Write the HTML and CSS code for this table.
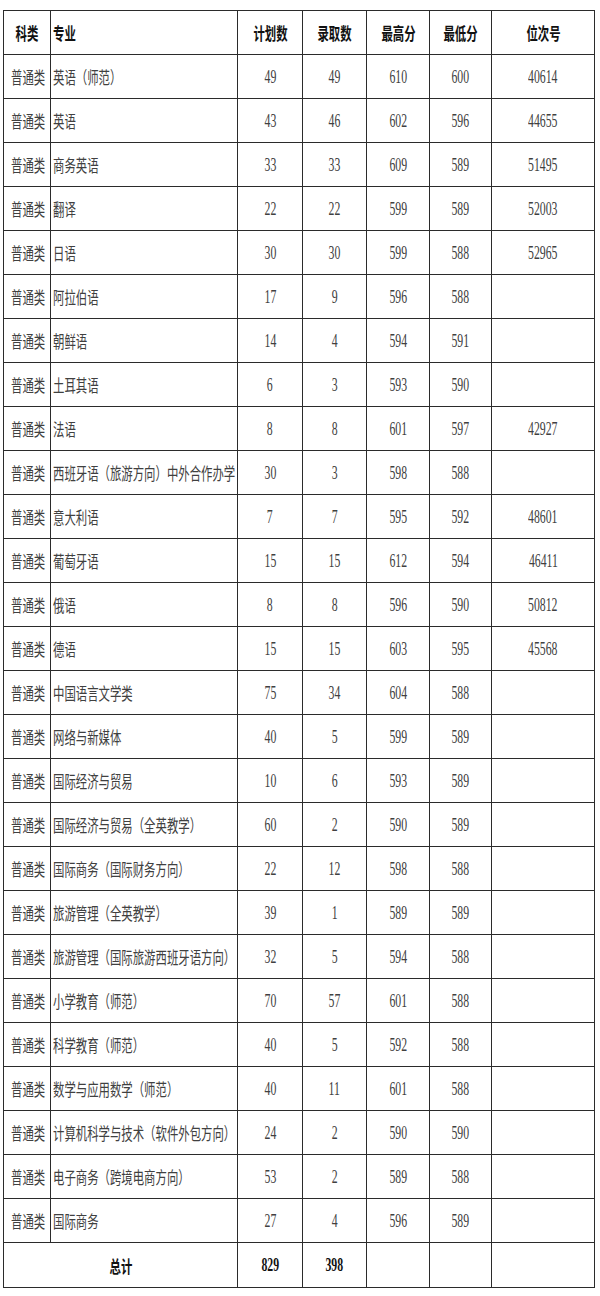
FILE: index.html
```html
<!DOCTYPE html>
<html lang="zh">
<head>
<meta charset="utf-8">
<title>录取分数</title>
<link rel="stylesheet" href="styles.css">
</head>
<body>
<div class="page">
<table class="grid">
<colgroup>
<col class="w-cat"><col class="w-major"><col class="w-plan"><col class="w-adm"><col class="w-hi"><col class="w-lo"><col class="w-rank">
</colgroup>
<thead>
<tr class="head">
<th class="ctr"><span class="s">科类</span></th>
<th class="left"><span class="s">专业</span></th>
<th class="ctr"><span class="s">计划数</span></th>
<th class="ctr"><span class="s">录取数</span></th>
<th class="ctr"><span class="s">最高分</span></th>
<th class="ctr"><span class="s">最低分</span></th>
<th class="ctr"><span class="s">位次号</span></th>
</tr>
</thead>
<tbody>
<tr><td class="cat"><span class="s">普通类</span></td><td class="left"><span class="s">英语（师范）</span></td><td class="num"><span class="s">49</span></td><td class="num"><span class="s">49</span></td><td class="num"><span class="s">610</span></td><td class="num"><span class="s">600</span></td><td class="num"><span class="s">40614</span></td></tr>
<tr><td class="cat"><span class="s">普通类</span></td><td class="left"><span class="s">英语</span></td><td class="num"><span class="s">43</span></td><td class="num"><span class="s">46</span></td><td class="num"><span class="s">602</span></td><td class="num"><span class="s">596</span></td><td class="num"><span class="s">44655</span></td></tr>
<tr><td class="cat"><span class="s">普通类</span></td><td class="left"><span class="s">商务英语</span></td><td class="num"><span class="s">33</span></td><td class="num"><span class="s">33</span></td><td class="num"><span class="s">609</span></td><td class="num"><span class="s">589</span></td><td class="num"><span class="s">51495</span></td></tr>
<tr><td class="cat"><span class="s">普通类</span></td><td class="left"><span class="s">翻译</span></td><td class="num"><span class="s">22</span></td><td class="num"><span class="s">22</span></td><td class="num"><span class="s">599</span></td><td class="num"><span class="s">589</span></td><td class="num"><span class="s">52003</span></td></tr>
<tr><td class="cat"><span class="s">普通类</span></td><td class="left"><span class="s">日语</span></td><td class="num"><span class="s">30</span></td><td class="num"><span class="s">30</span></td><td class="num"><span class="s">599</span></td><td class="num"><span class="s">588</span></td><td class="num"><span class="s">52965</span></td></tr>
<tr><td class="cat"><span class="s">普通类</span></td><td class="left"><span class="s">阿拉伯语</span></td><td class="num"><span class="s">17</span></td><td class="num"><span class="s">9</span></td><td class="num"><span class="s">596</span></td><td class="num"><span class="s">588</span></td><td class="num"></td></tr>
<tr><td class="cat"><span class="s">普通类</span></td><td class="left"><span class="s">朝鲜语</span></td><td class="num"><span class="s">14</span></td><td class="num"><span class="s">4</span></td><td class="num"><span class="s">594</span></td><td class="num"><span class="s">591</span></td><td class="num"></td></tr>
<tr><td class="cat"><span class="s">普通类</span></td><td class="left"><span class="s">土耳其语</span></td><td class="num"><span class="s">6</span></td><td class="num"><span class="s">3</span></td><td class="num"><span class="s">593</span></td><td class="num"><span class="s">590</span></td><td class="num"></td></tr>
<tr><td class="cat"><span class="s">普通类</span></td><td class="left"><span class="s">法语</span></td><td class="num"><span class="s">8</span></td><td class="num"><span class="s">8</span></td><td class="num"><span class="s">601</span></td><td class="num"><span class="s">597</span></td><td class="num"><span class="s">42927</span></td></tr>
<tr><td class="cat"><span class="s">普通类</span></td><td class="left"><span class="s">西班牙语（旅游方向）中外合作办学</span></td><td class="num"><span class="s">30</span></td><td class="num"><span class="s">3</span></td><td class="num"><span class="s">598</span></td><td class="num"><span class="s">588</span></td><td class="num"></td></tr>
<tr><td class="cat"><span class="s">普通类</span></td><td class="left"><span class="s">意大利语</span></td><td class="num"><span class="s">7</span></td><td class="num"><span class="s">7</span></td><td class="num"><span class="s">595</span></td><td class="num"><span class="s">592</span></td><td class="num"><span class="s">48601</span></td></tr>
<tr><td class="cat"><span class="s">普通类</span></td><td class="left"><span class="s">葡萄牙语</span></td><td class="num"><span class="s">15</span></td><td class="num"><span class="s">15</span></td><td class="num"><span class="s">612</span></td><td class="num"><span class="s">594</span></td><td class="num"><span class="s">46411</span></td></tr>
<tr><td class="cat"><span class="s">普通类</span></td><td class="left"><span class="s">俄语</span></td><td class="num"><span class="s">8</span></td><td class="num"><span class="s">8</span></td><td class="num"><span class="s">596</span></td><td class="num"><span class="s">590</span></td><td class="num"><span class="s">50812</span></td></tr>
<tr><td class="cat"><span class="s">普通类</span></td><td class="left"><span class="s">德语</span></td><td class="num"><span class="s">15</span></td><td class="num"><span class="s">15</span></td><td class="num"><span class="s">603</span></td><td class="num"><span class="s">595</span></td><td class="num"><span class="s">45568</span></td></tr>
<tr><td class="cat"><span class="s">普通类</span></td><td class="left"><span class="s">中国语言文学类</span></td><td class="num"><span class="s">75</span></td><td class="num"><span class="s">34</span></td><td class="num"><span class="s">604</span></td><td class="num"><span class="s">588</span></td><td class="num"></td></tr>
<tr><td class="cat"><span class="s">普通类</span></td><td class="left"><span class="s">网络与新媒体</span></td><td class="num"><span class="s">40</span></td><td class="num"><span class="s">5</span></td><td class="num"><span class="s">599</span></td><td class="num"><span class="s">589</span></td><td class="num"></td></tr>
<tr><td class="cat"><span class="s">普通类</span></td><td class="left"><span class="s">国际经济与贸易</span></td><td class="num"><span class="s">10</span></td><td class="num"><span class="s">6</span></td><td class="num"><span class="s">593</span></td><td class="num"><span class="s">589</span></td><td class="num"></td></tr>
<tr><td class="cat"><span class="s">普通类</span></td><td class="left"><span class="s">国际经济与贸易（全英教学）</span></td><td class="num"><span class="s">60</span></td><td class="num"><span class="s">2</span></td><td class="num"><span class="s">590</span></td><td class="num"><span class="s">589</span></td><td class="num"></td></tr>
<tr><td class="cat"><span class="s">普通类</span></td><td class="left"><span class="s">国际商务（国际财务方向）</span></td><td class="num"><span class="s">22</span></td><td class="num"><span class="s">12</span></td><td class="num"><span class="s">598</span></td><td class="num"><span class="s">588</span></td><td class="num"></td></tr>
<tr><td class="cat"><span class="s">普通类</span></td><td class="left"><span class="s">旅游管理（全英教学）</span></td><td class="num"><span class="s">39</span></td><td class="num"><span class="s">1</span></td><td class="num"><span class="s">589</span></td><td class="num"><span class="s">589</span></td><td class="num"></td></tr>
<tr><td class="cat"><span class="s">普通类</span></td><td class="left"><span class="s">旅游管理（国际旅游西班牙语方向）</span></td><td class="num"><span class="s">32</span></td><td class="num"><span class="s">5</span></td><td class="num"><span class="s">594</span></td><td class="num"><span class="s">588</span></td><td class="num"></td></tr>
<tr><td class="cat"><span class="s">普通类</span></td><td class="left"><span class="s">小学教育（师范）</span></td><td class="num"><span class="s">70</span></td><td class="num"><span class="s">57</span></td><td class="num"><span class="s">601</span></td><td class="num"><span class="s">588</span></td><td class="num"></td></tr>
<tr><td class="cat"><span class="s">普通类</span></td><td class="left"><span class="s">科学教育（师范）</span></td><td class="num"><span class="s">40</span></td><td class="num"><span class="s">5</span></td><td class="num"><span class="s">592</span></td><td class="num"><span class="s">588</span></td><td class="num"></td></tr>
<tr><td class="cat"><span class="s">普通类</span></td><td class="left"><span class="s">数学与应用数学（师范）</span></td><td class="num"><span class="s">40</span></td><td class="num"><span class="s">11</span></td><td class="num"><span class="s">601</span></td><td class="num"><span class="s">588</span></td><td class="num"></td></tr>
<tr><td class="cat"><span class="s">普通类</span></td><td class="left"><span class="s">计算机科学与技术（软件外包方向）</span></td><td class="num"><span class="s">24</span></td><td class="num"><span class="s">2</span></td><td class="num"><span class="s">590</span></td><td class="num"><span class="s">590</span></td><td class="num"></td></tr>
<tr><td class="cat"><span class="s">普通类</span></td><td class="left"><span class="s">电子商务（跨境电商方向）</span></td><td class="num"><span class="s">53</span></td><td class="num"><span class="s">2</span></td><td class="num"><span class="s">589</span></td><td class="num"><span class="s">588</span></td><td class="num"></td></tr>
<tr><td class="cat"><span class="s">普通类</span></td><td class="left"><span class="s">国际商务</span></td><td class="num"><span class="s">27</span></td><td class="num"><span class="s">4</span></td><td class="num"><span class="s">596</span></td><td class="num"><span class="s">589</span></td><td class="num"></td></tr>
<tr class="total"><td class="ctr" colspan="2"><span class="s">总计</span></td><td class="num"><span class="s">829</span></td><td class="num"><span class="s">398</span></td><td class="num"></td><td class="num"></td><td class="num"></td></tr>
</tbody>
</table>
</div>
</body>
</html>
```

FILE: styles.css
```css
html, body {
  margin: 0;
  padding: 0;
  background: #ffffff;
}

.page {
  padding: 10px 0 0 3px;
}

.grid {
  border-collapse: collapse;
  table-layout: fixed;
  width: 591px;
  font-family: "Liberation Serif", "Noto Sans CJK SC", serif;
  font-size: 17px;
  color: #404040;
}

.w-cat { width: 47px; }
.w-major { width: 187px; }
.w-plan { width: 65px; }
.w-adm { width: 64px; }
.w-hi { width: 63px; }
.w-lo { width: 62px; }
.w-rank { width: 103px; }

.grid th,
.grid td {
  border: 1px solid #2b2b2b;
  height: 43px;
  padding: 0;
  white-space: nowrap;
  vertical-align: middle;
}

.grid th {
  font-weight: bold;
  color: #111111;
}

.s {
  display: inline-block;
  transform: scaleX(0.67);
  transform-origin: center center;
}

.ctr {
  text-align: center;
}

.left {
  text-align: left;
  padding-left: 2px !important;
}

.left .s {
  transform-origin: left center;
}

.cat {
  text-align: left;
  padding-left: 7px !important;
}

.cat .s {
  transform-origin: left center;
}

.num {
  text-align: center;
  font-size: 19px;
}

.num .s {
  transform: scaleX(0.62);
}

.total td {
  height: 44px;
  font-weight: bold;
  color: #111111;
}
```
